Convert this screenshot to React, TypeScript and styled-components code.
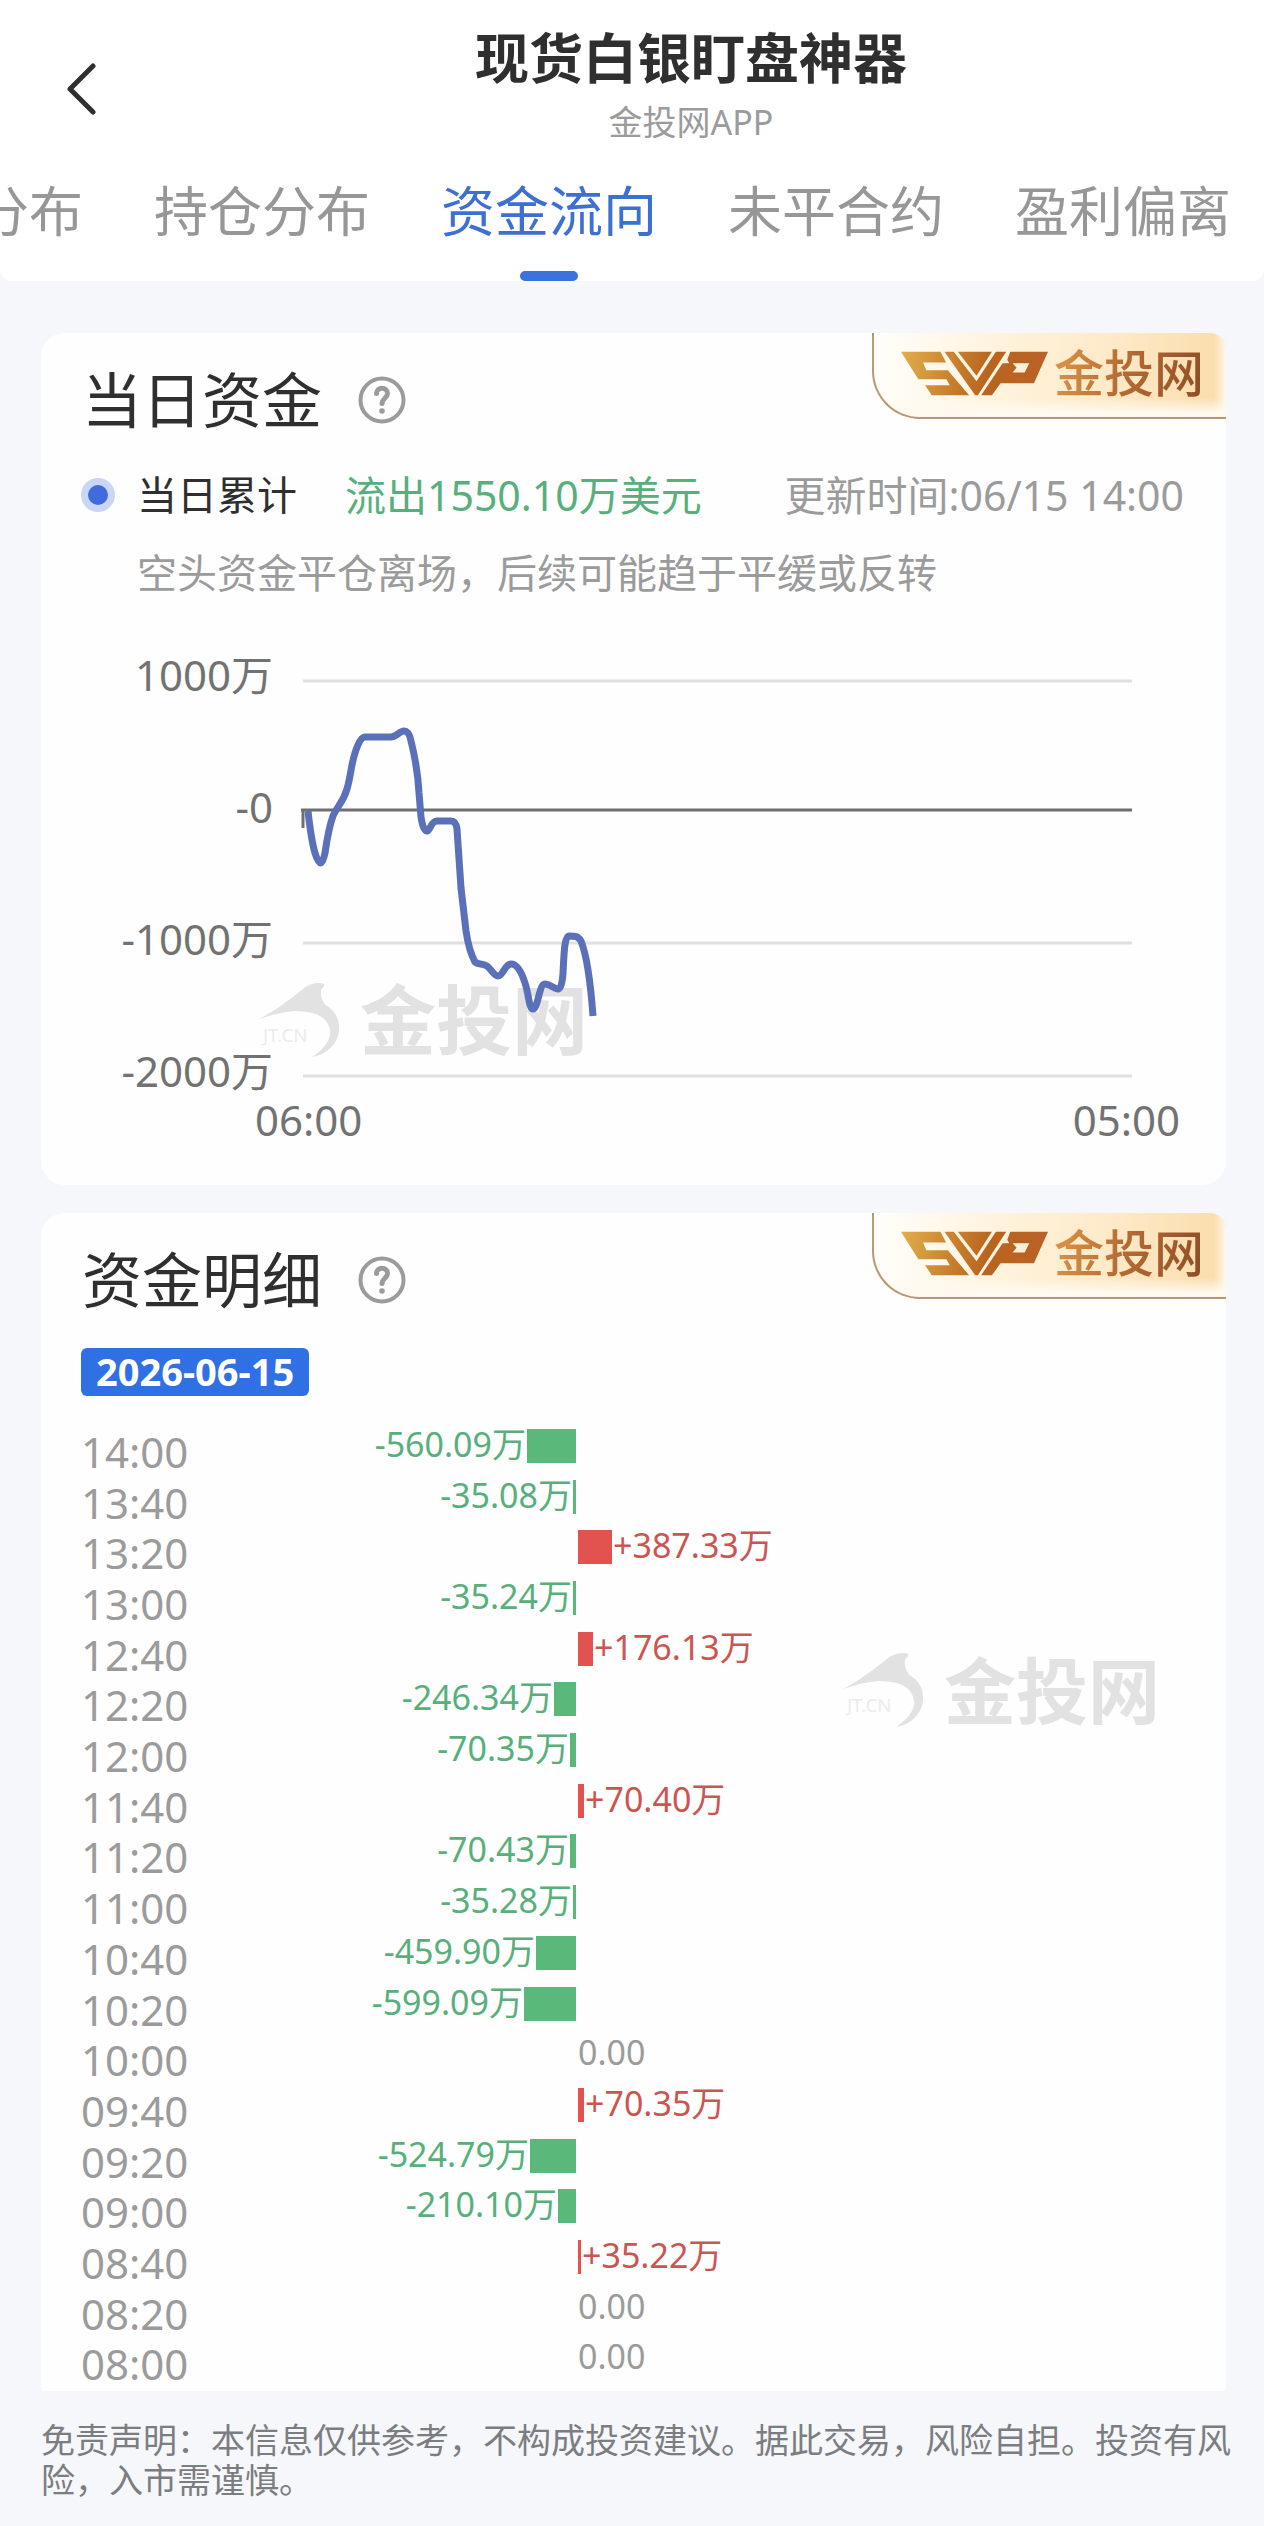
import React from "react";
import styled, { createGlobalStyle } from "styled-components";

const GlobalStyle = createGlobalStyle`
  * { box-sizing: border-box; }
  body {
    margin: 0;
    background: #f5f7fb;
    color: #2f2f2f;
    font-family: "Noto Sans", "Noto Sans CJK SC", sans-serif;
    font-size: 40px;
  }
  h1, h2, p, ol { margin: 0; padding: 0; font-weight: 400; }
  ol { list-style: none; }
  button { border: 0; padding: 0; background: none; font: inherit; color: inherit; cursor: pointer; }
`;

const Header = styled.header`
  background: #fff;
  border-radius: 0 0 12px 12px;
  overflow: hidden;
`;

const TitleBar = styled.div`
  display: grid;
  grid-template-columns: 118px 1fr;
  align-items: center;
  padding-top: 22px;
`;

const BackButton = styled.button`
  justify-self: end;
  width: 72px;
  height: 78px;
  display: flex;
  align-items: flex-end;
  justify-content: center;
  padding-bottom: 10px;
`;

const Titles = styled.div`
  text-align: center;
`;

const AppTitle = styled.h1`
  font-size: 54px;
  line-height: 72px;
  font-weight: 700;
`;

const AppSubtitle = styled.p`
  font-size: 34px;
  line-height: 56px;
  color: #9b9b9b;
`;

const Tabs = styled.nav`
  display: flex;
  justify-content: flex-end;
  gap: 71px;
  padding: 25px 33px 0 0;
`;

const Tab = styled.a<{ $active?: boolean }>`
  flex: none;
  display: flex;
  flex-direction: column;
  align-items: center;
  height: 106px;
  font-size: 54px;
  line-height: 72px;
  text-decoration: none;
  color: ${(p) => (p.$active ? "#3e6fd2" : "#979797")};
  &::after {
    content: "";
    width: 58px;
    height: 10px;
    margin-top: 24px;
    border-radius: 5px;
    background: ${(p) => (p.$active ? "#3b72de" : "transparent")};
  }
`;

const Main = styled.main`
  display: flex;
  flex-direction: column;
  gap: 28px;
  padding: 52px 38px 0 41px;
`;

const Card = styled.section<{ $bottom: number }>`
  position: relative;
  background: #fefefe;
  border-radius: 24px 24px ${(p) => (p.$bottom > 10 ? "24px 24px" : "4px 4px")};
  padding: 25px 42px ${(p) => p.$bottom}px 40px;
`;

const CardHead = styled.div`
  display: flex;
  align-items: center;
  gap: 36px;
  padding-left: 1px;
`;

const CardTitle = styled.h2`
  font-size: 60px;
  line-height: 84px;
`;

const HelpButton = styled.button`
  display: flex;
`;

const Badge = styled.div`
  position: absolute;
  top: 0;
  right: 0;
  display: flex;
  align-items: center;
  gap: 6px;
  width: 354px;
  height: 86px;
  padding: 0 0 4px 27px;
  border: solid #b79a72;
  border-width: 0 0 2px 2px;
  border-radius: 0 16px 0 48px;
  background:
    linear-gradient(to bottom, transparent 78%, #fffaf0 96%),
    linear-gradient(to left, #fff8ea 0, transparent 12px),
    linear-gradient(to right, #fffefb 0%, #fff3dd 35%, #fde9c6 70%, #fadcab 100%);
`;

const BadgeText = styled.span`
  font-size: 50px;
  line-height: 60px;
  font-weight: 500;
  color: transparent;
  background: linear-gradient(100deg, #dc9648 0%, #b86c34 45%, #8e4c26 100%);
  background-clip: text;
  -webkit-background-clip: text;
`;

const Watermark = styled.div<{ $left: string; $top: number; $size: number }>`
  position: absolute;
  left: ${(p) => p.$left};
  top: ${(p) => p.$top}px;
  display: flex;
  align-items: center;
  gap: 20px;
  pointer-events: none;
  color: #e2e2e2;
  font-size: ${(p) => p.$size}px;
  line-height: 80px;
  font-weight: 700;
  white-space: nowrap;
`;

const Summary = styled.div`
  display: grid;
  grid-template-columns: 34px auto auto 1fr;
  align-items: center;
  margin-top: 25px;
  line-height: 56px;
  font-size: 41px;
  white-space: nowrap;
`;

const Dot = styled.span`
  width: 34px;
  height: 34px;
  border: 7px solid #c9d6f5;
  border-radius: 50%;
  background: #3f6bdc;
`;

const SummaryLabel = styled.span`
  margin-left: 22px;
  font-size: 40px;
`;

const SummaryValue = styled.strong`
  margin-left: 48px;
  font-weight: 400;
  color: #57b07b;
`;

const UpdateTime = styled.time`
  justify-self: end;
  color: #9b9b9b;
`;

const Note = styled.p`
  margin: 22px 0 0 56px;
  line-height: 56px;
  color: #9b9b9b;
`;

const Chart = styled.div`
  position: relative;
  display: grid;
  grid-template-columns: 192px 1fr;
  column-gap: 30px;
  margin: 46px 52px 0 0;
  font-size: 42px;
  color: #727272;
`;

const YAxis = styled.div`
  display: flex;
  flex-direction: column;
  justify-content: space-between;
  text-align: right;
  line-height: 56px;
  white-space: nowrap;
`;

const Plot = styled.svg`
  display: block;
  width: 100%;
  height: 396px;
  margin: 34px 0 22px;
  overflow: visible;
`;

const XAxis = styled.div`
  grid-column: 2;
  display: flex;
  justify-content: space-between;
  margin: -9px -48px 0;
  line-height: 60px;
`;

const DateTag = styled.time`
  display: block;
  width: fit-content;
  height: 48px;
  margin-top: 26px;
  padding: 0 15px;
  border-radius: 6px;
  background: #2f70e4;
  color: #fff;
  font-size: 38px;
  line-height: 46px;
  font-weight: 700;
`;

const FlowList = styled.ol`
  display: grid;
  grid-auto-rows: 1fr;
  min-height: 963px;
  margin-top: 31px;
`;

const FlowRow = styled.li`
  display: grid;
  grid-template-columns: 112px 383fr 608fr;
  height: 50px;
`;

const FlowTime = styled.time`
  font-size: 42px;
  line-height: 50px;
  color: #9b9b9b;
`;

const tones = { down: "#57b07b", up: "#cc5552", flat: "#9b9b9b" };

const FlowValue = styled.span<{ $tone: keyof typeof tones }>`
  grid-column: ${(p) => (p.$tone === "down" ? 2 : 3)};
  display: flex;
  flex-direction: ${(p) => (p.$tone === "down" ? "row-reverse" : "row")};
  gap: 1px;
  height: 34px;
  margin-top: 2px;
  padding-left: ${(p) => (p.$tone === "down" ? 0 : 2)}px;
  font-size: 34px;
  line-height: 30px;
  white-space: nowrap;
  color: ${(p) => tones[p.$tone]};
`;

const FlowBar = styled.i<{ $tone: keyof typeof tones }>`
  height: 34px;
  background: ${(p) => (p.$tone === "down" ? "#5ab87a" : "#e2524f")};
`;

const Disclaimer = styled.footer`
  padding: 29px 33px 26px 41px;
  font-size: 34px;
  line-height: 40px;
  color: #7b7d80;
`;

const tabs = ["分布", "持仓分布", "资金流向", "未平合约", "盈利偏离"];

const flows: [string, number][] = [
  ["14:00", -560.09],
  ["13:40", -35.08],
  ["13:20", 387.33],
  ["13:00", -35.24],
  ["12:40", 176.13],
  ["12:20", -246.34],
  ["12:00", -70.35],
  ["11:40", 70.4],
  ["11:20", -70.43],
  ["11:00", -35.28],
  ["10:40", -459.9],
  ["10:20", -599.09],
  ["10:00", 0],
  ["09:40", 70.35],
  ["09:20", -524.79],
  ["09:00", -210.1],
  ["08:40", 35.22],
  ["08:20", 0],
  ["08:00", 0],
];

function HelpIcon() {
  return (
    <svg width="48" height="48" viewBox="0 0 48 48" fill="none" stroke="#9b9b9b" strokeWidth="4" strokeLinecap="round">
      <circle cx="24" cy="24" r="21.5" />
      <path d="M18.5 17.5C18.5 10.5 29.5 10.5 29.5 17.5C29.5 22 24 22.5 24 27.5" strokeWidth="5" />
      <circle cx="24" cy="35" r="2.8" fill="#9b9b9b" stroke="none" />
    </svg>
  );
}

function BrandBadge({ id }: { id: string }) {
  return (
    <Badge>
      <svg width="147" height="45" viewBox="32 41 440 132" role="img" aria-label="SVP">
        <defs>
          <linearGradient id={id} x1="32" y1="42" x2="472" y2="120" gradientUnits="userSpaceOnUse">
            <stop offset="0" stopColor="#e2ae4c" />
            <stop offset="0.35" stopColor="#c9822e" />
            <stop offset="0.6" stopColor="#b8651f" />
            <stop offset="1" stopColor="#bb6128" />
          </linearGradient>
        </defs>
        <g fill={`url(#${id})`}>
          <path d="M32 42H150L167 74H98L108 97H172L236 172H124L104 142H178L168 124H84Z" />
          <path d="M162 42H190L258 130L316 42H347L262 172H254Z" />
          <path d="M202 42H304L258 114Z" />
          <path fillRule="evenodd" d="M359 42H472L430 136H330L304 172H272L336 76H356L350 66ZM366 76L378 90L366 104H402L416 76Z" />
        </g>
      </svg>
      <BadgeText>金投网</BadgeText>
    </Badge>
  );
}

function BrandWatermark({ left, top, size }: { left: string; top: number; size: number }) {
  return (
    <Watermark $left={left} $top={top} $size={size} aria-hidden="true">
      <svg width="82" height="76" viewBox="128 160 246 228">
        <path
          fill="#e2e2e2"
          d="M130 272C190 240 240 200 270 175Q300 158 326 165Q329 172 318 182Q312 205 330 228C365 250 372 275 371 305C368 340 340 378 290 385C330 360 345 330 345 310C340 270 310 248 240 247Q190 250 130 272Z"
        />
        <text x="143" y="339" fontSize="56" fontWeight="400" fill="#ececec">JT.CN</text>
      </svg>
      <span>金投网</span>
    </Watermark>
  );
}

function FlowItem({ time, value }: { time: string; value: number }) {
  const tone = value < 0 ? "down" : value > 0 ? "up" : "flat";
  const label = value === 0 ? "0.00" : `${value > 0 ? "+" : ""}${value.toFixed(2)}万`;
  return (
    <FlowRow>
      <FlowTime>{time}</FlowTime>
      <FlowValue $tone={tone}>
        {value !== 0 && <FlowBar $tone={tone} style={{ width: Math.round(Math.abs(value) * 0.0875) }} />}
        <span>{label}</span>
      </FlowValue>
    </FlowRow>
  );
}

export default function App() {
  return (
    <>
      <GlobalStyle />
      <Header>
        <TitleBar>
          <BackButton aria-label="返回">
            <svg width="32" height="52" viewBox="0 0 32 52" fill="none" stroke="#2f2f2f" strokeWidth="5" strokeLinecap="round" strokeLinejoin="round">
              <path d="M27 3L4 26L27 49" />
            </svg>
          </BackButton>
          <Titles>
            <AppTitle>现货白银盯盘神器</AppTitle>
            <AppSubtitle>金投网APP</AppSubtitle>
          </Titles>
        </TitleBar>
        <Tabs>
          {tabs.map((t) => (
            <Tab key={t} href="#" $active={t === "资金流向"}>{t}</Tab>
          ))}
        </Tabs>
      </Header>
      <Main>
        <Card $bottom={35}>
          <BrandBadge id="gold-day" />
          <CardHead>
            <CardTitle>当日资金</CardTitle>
            <HelpButton aria-label="当日资金说明"><HelpIcon /></HelpButton>
          </CardHead>
          <Summary>
            <Dot />
            <SummaryLabel>当日累计</SummaryLabel>
            <SummaryValue>流出1550.10万美元</SummaryValue>
            <UpdateTime>更新时间:06/15 14:00</UpdateTime>
          </Summary>
          <Note>空头资金平仓离场，后续可能趋于平缓或反转</Note>
          <BrandWatermark left="217px" top={647} size={76} />
          <Chart>
            <YAxis>
              <span>1000万</span>
              <span>-0</span>
              <span>-1000万</span>
              <span>-2000万</span>
            </YAxis>
            <Plot viewBox="0 0 829 396" preserveAspectRatio="none" fill="none">
              <path d="M0 0H829M0 262H829M0 395H829" stroke="#e0e0e0" strokeWidth="3" />
              <path d="M-2 129H829M0 129V147" stroke="#6f6f73" strokeWidth="3" />
              <path
                stroke="#5a70b8"
                strokeWidth="7"
                strokeLinejoin="round"
                d="M5 130C7 148 9 162 12 172Q18 192 22 172C24 158 26 146 30 135C34 125 40 122 44 108C48 94 48 84 52 72Q57 56 62 56H88C94 56 96 50 101 50Q106 50 108 60C112 76 115 92 116 112L118 136Q120 150 124 150C127 150 128 140 134 140H148Q153 140 154 148L158 207L163 250Q166 270 172 281C175 284 179 282 184 285C188 288 191 295 195 295C200 295 202 283 208 283Q216 283 222 302C226 314 226 328 230 328C235 328 236 303 242 303C246 303 252 308 255 308Q259 308 260 292C261 276 261 255 266 255C272 255 275 255 278 260Q286 280 290 335"
              />
            </Plot>
            <XAxis>
              <span>06:00</span>
              <span>05:00</span>
            </XAxis>
          </Chart>
        </Card>
        <Card $bottom={1}>
          <BrandBadge id="gold-detail" />
          <CardHead>
            <CardTitle>资金明细</CardTitle>
            <HelpButton aria-label="资金明细说明"><HelpIcon /></HelpButton>
          </CardHead>
          <DateTag dateTime="2026-06-15">2026-06-15</DateTag>
          <BrandWatermark left="67.6%" top={437} size={72} />
          <FlowList>
            {flows.map(([time, value]) => (
              <FlowItem key={time} time={time} value={value} />
            ))}
          </FlowList>
        </Card>
      </Main>
      <Disclaimer>
        免责声明：本信息仅供参考，不构成投资建议。据此交易，风险自担。投资有风险，入市需谨慎。
      </Disclaimer>
    </>
  );
}
